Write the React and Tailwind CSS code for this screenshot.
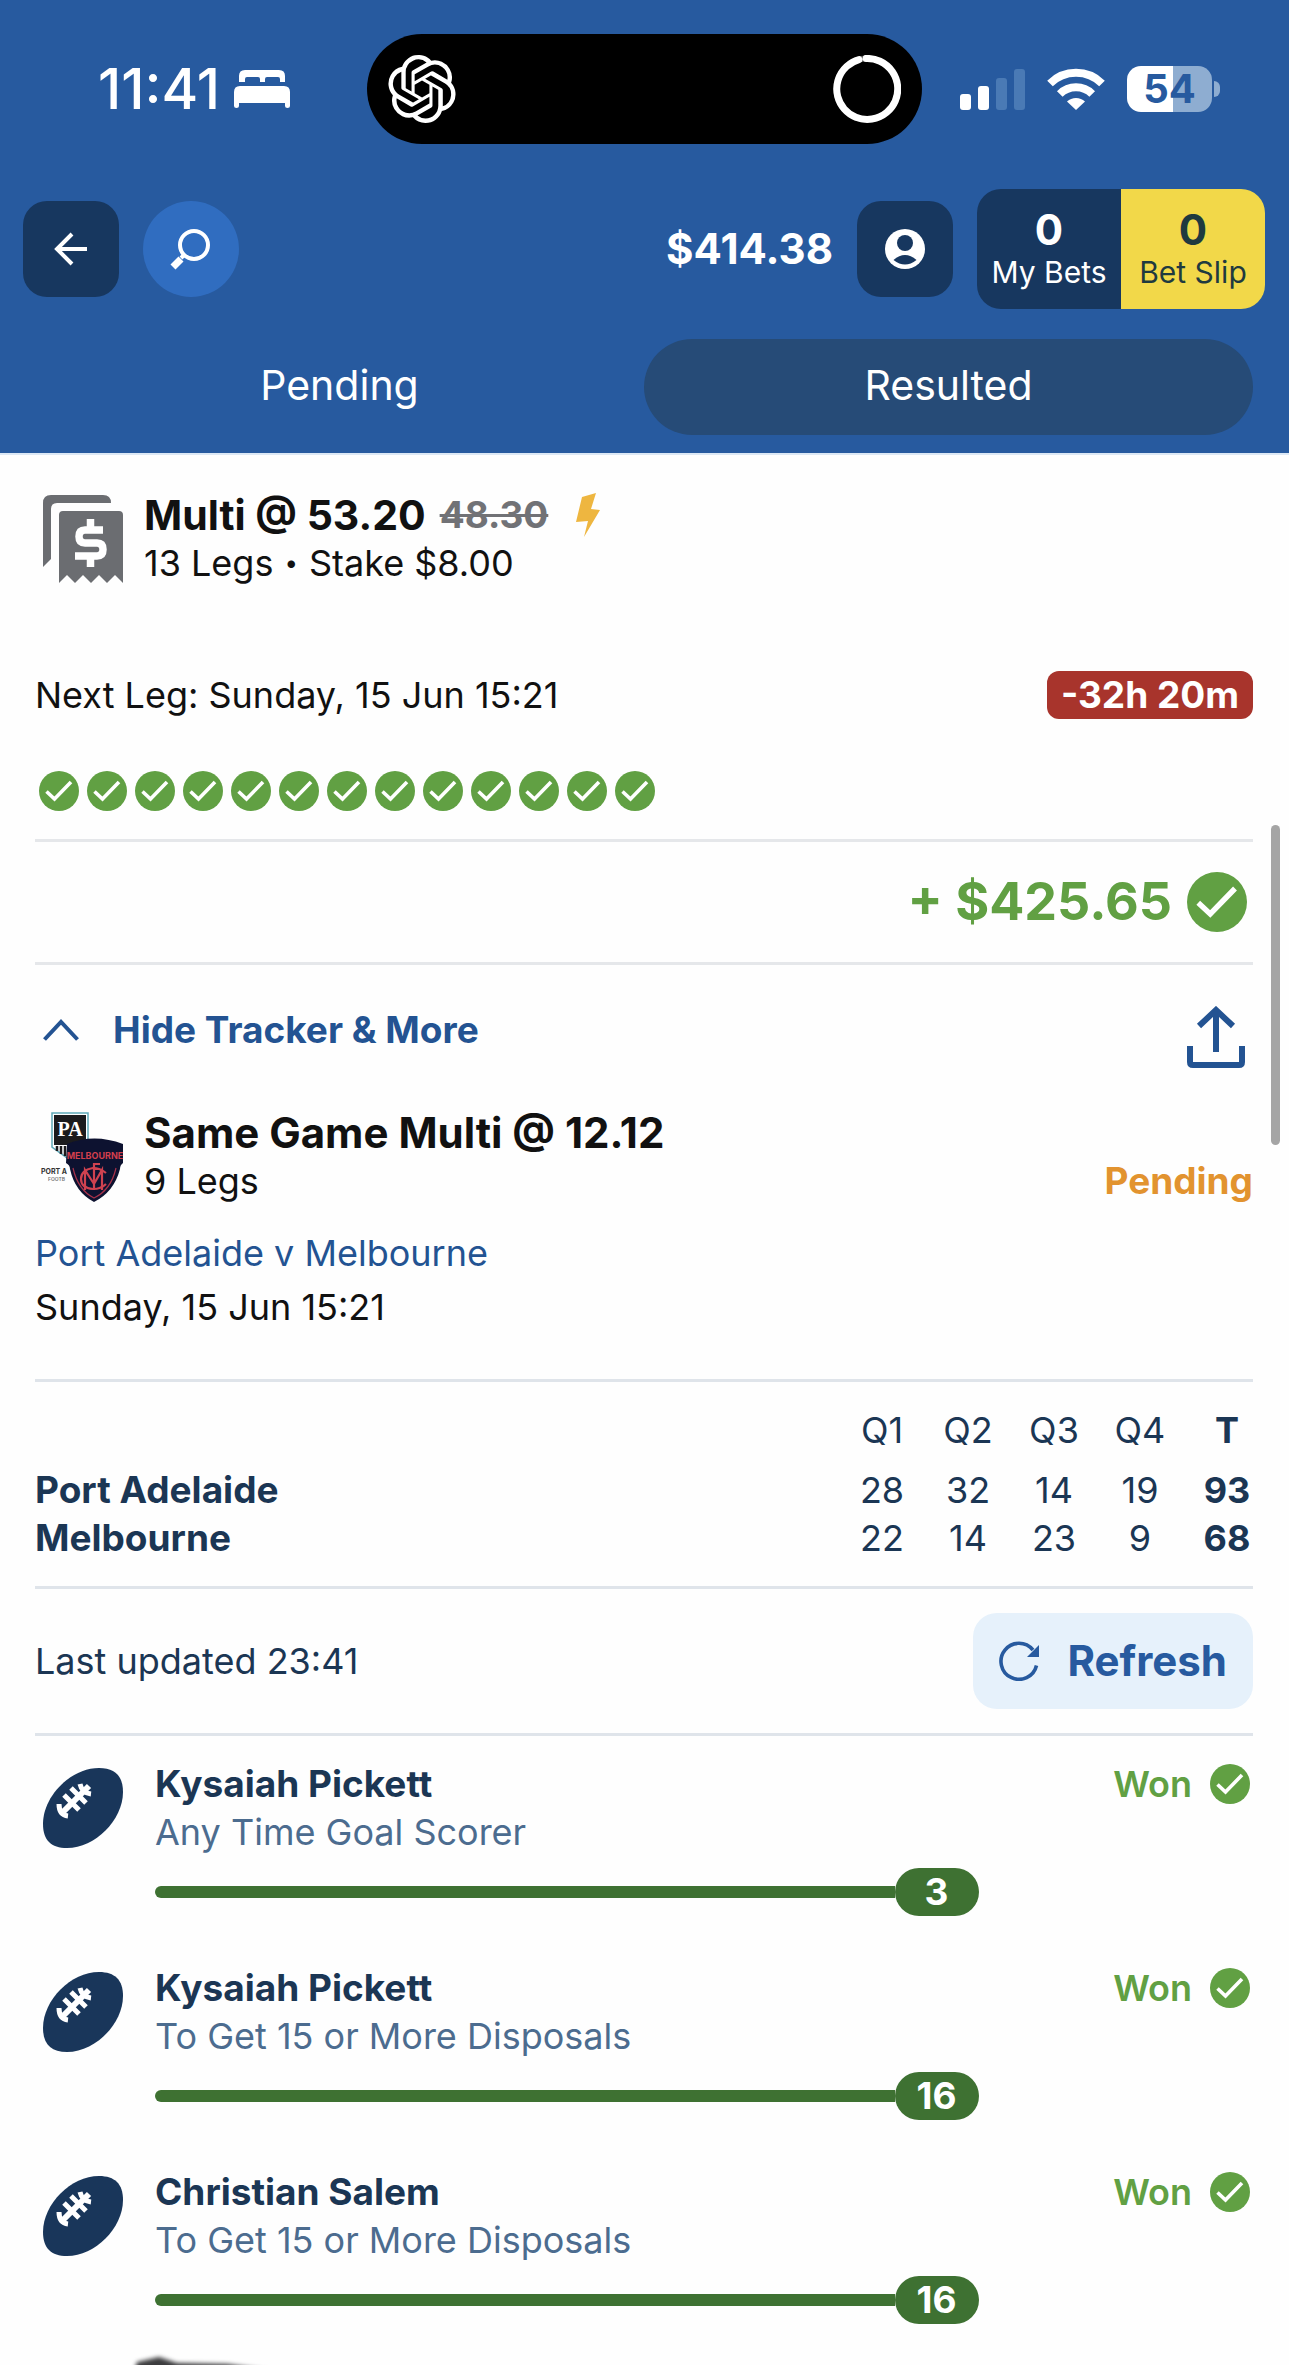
import React, { useState } from "react";
import { SiOpenai } from "react-icons/si";

const scores = [
  { team: "Port Adelaide", quarters: [28, 32, 14, 19], total: 93 },
  { team: "Melbourne", quarters: [22, 14, 23, 9], total: 68 },
];

const legs = [
  { player: "Kysaiah Pickett", market: "Any Time Goal Scorer", value: 3 },
  { player: "Kysaiah Pickett", market: "To Get 15 or More Disposals", value: 16 },
  { player: "Christian Salem", market: "To Get 15 or More Disposals", value: 16 },
];

function CheckCircle({ className }) {
  return (
    <svg viewBox="0 0 40 40" className={className} aria-hidden="true">
      <circle cx="20" cy="20" r="20" fill="#61a043" />
      <path d="M7.5 20.5 15.5 28 32 11" fill="none" stroke="#fff" strokeWidth="3.6" />
    </svg>
  );
}

function BedIcon() {
  return (
    <svg viewBox="0 0 56 38" className="h-[38px] w-14" fill="#fff" aria-hidden="true">
      <path d="M5 12V6q0-6 6-6h34q6 0 6 6v6h-5V9q0-2-2-2H33q-2 0-2 2v3h-5V9q0-2-2-2H13q-2 0-2 2v3z" />
      <path d="M0 22q0-6 6-6h44q6 0 6 6v14q0 2-2.500 2T51 36v-3H5v3q0 2-2.500 2T0 36z" />
    </svg>
  );
}

function WifiIcon() {
  return (
    <svg viewBox="0 0 58 42" className="h-[42px] w-[58px]" aria-hidden="true">
      <g fill="none" stroke="#fff" strokeWidth="8">
        <path d="M3 15.500a37 37 0 0 1 52 0" />
        <path d="M12.800 26a23 23 0 0 1 32.400 0" />
      </g>
      <path d="M29 42 20 33.500a13 13 0 0 1 18 0z" fill="#fff" />
    </svg>
  );
}

function StatusBar() {
  return (
    <div className="flex items-center pl-[98px] pr-[69px] pt-[34px] text-white">
      <div className="flex w-[269px] shrink-0 items-center gap-[14px]">
        <span className="text-[56px] leading-[60px] font-medium">11:41</span>
        <BedIcon />
      </div>
      <div className="flex h-[110px] flex-1 items-center justify-between rounded-full bg-black px-[21px]">
        <SiOpenai className="size-[68px]" />
        <svg viewBox="0 0 68 68" className="size-[68px]" fill="none" aria-hidden="true">
          <circle cx="34" cy="34" r="30.500" stroke="#555" strokeWidth="6" />
          <path d="M31 3.600A30.500 30.500 0 1 1 24 5.200" stroke="#fff" strokeWidth="7" strokeLinecap="round" transform="rotate(4 34 34)" />
        </svg>
      </div>
      <div className="ml-[38px] flex items-center">
        <div className="flex h-[42px] items-end gap-[7px]">
          <span className="h-4 w-[11px] rounded-[3px] bg-white" />
          <span className="h-6 w-[11px] rounded-[3px] bg-white" />
          <span className="h-8 w-[11px] rounded-[3px] bg-[#4a7ab5]" />
          <span className="h-[41px] w-[11px] rounded-[3px] bg-[#4a7ab5]" />
        </div>
        <div className="ml-[22px]">
          <WifiIcon />
        </div>
        <div className="ml-[22px] flex h-[46px] w-[85px] items-center justify-center rounded-[14px] bg-linear-to-r from-white from-54% to-[#8eadd1] to-54% text-[40px] leading-none font-bold text-[#275a9f]">
          54
        </div>
        <span className="ml-[2px] h-4 w-[6px] rounded-r-full bg-[#8eadd1]" />
      </div>
    </div>
  );
}

function NavBar() {
  return (
    <div className="flex items-center pl-[23px] pr-6 pt-[45px] text-white">
      <button aria-label="Back" className="flex size-24 items-center justify-center rounded-3xl bg-[#17375f]">
        <svg viewBox="0 0 34 34" className="size-[34px]" fill="none" stroke="#fff" strokeWidth="4" aria-hidden="true">
          <path d="M33 17H3M18 2 3 17l15 15" />
        </svg>
      </button>
      <button aria-label="Search" className="ml-6 flex size-24 items-center justify-center rounded-full bg-[#306dc0]">
        <svg viewBox="0 0 42 42" className="size-[42px]" fill="none" stroke="#fff" aria-hidden="true">
          <circle cx="24" cy="17" r="14" strokeWidth="4" />
          <path d="M14 27l-3 3" strokeWidth="4" />
          <path d="M11 31 3 39" strokeWidth="7" />
        </svg>
      </button>
      <span className="ml-auto text-[42px] leading-[48px] font-bold">$414.38</span>
      <button aria-label="Account" className="ml-6 flex size-24 items-center justify-center rounded-3xl bg-[#17375f]">
        <svg viewBox="0 0 40 40" className="size-10" aria-hidden="true">
          <circle cx="20" cy="20" r="20" fill="#fff" />
          <circle cx="20" cy="14" r="8" fill="#17375f" />
          <path d="M8.500 31q11.500-10 23 0-11.500 9-23 0z" fill="#17375f" />
        </svg>
      </button>
      <div className="ml-6 flex h-[120px] overflow-hidden rounded-3xl">
        <button className="flex w-36 flex-col items-center justify-center bg-[#17375f] pt-[2px]">
          <span className="text-[42px] leading-[44px] font-bold">0</span>
          <span className="text-[30px] leading-[40px]">My Bets</span>
        </button>
        <button className="flex w-36 flex-col items-center justify-center bg-[#f2d849] pt-[2px] text-[#1f3a3f]">
          <span className="text-[42px] leading-[44px] font-bold">0</span>
          <span className="text-[30px] leading-[40px]">Bet Slip</span>
        </button>
      </div>
    </div>
  );
}

function ReceiptIcon() {
  return (
    <svg viewBox="0 0 80 88" className="h-[88px] w-20" aria-hidden="true">
      <path d="M0 72V8q0-8 8-8h52q8 0 8 8H14q-6 0-6 6v50z" fill="#6b6d71" />
      <path d="M16 88V20q0-4 4-4h56q4 0 4 4v68l-8-8-8 8-8-8-8 8-8-8-8 8-8-8z" fill="#6b6d71" />
      <path d="M60 35H42q-6 0-6 6.500t6 6.500h12q6 0 6 6.500T54 61H32M47.500 24v13M47.500 59v13" fill="none" stroke="#fff" strokeWidth="7.500" />
    </svg>
  );
}

function BoltIcon() {
  return (
    <svg viewBox="0 0 24 44" className="h-11 w-6" aria-hidden="true">
      <path d="M6 4 20 0 15 16l9 1L8 44l4-16-12 1z" fill="#eeb640" />
    </svg>
  );
}

function ClubLogos() {
  return (
    <svg viewBox="0 0 84 90" className="h-[90px] w-[84px]" fontFamily="Inter, sans-serif" aria-hidden="true">
      <path d="M12 1h36v34L30 48 12 35z" fill="#fff" stroke="#5fa9b8" strokeWidth="1.500" />
      <path d="M14 3h32v30H14z" fill="#1b1b1d" />
      <path d="M17 34v5M21 34v8M25 34v10M29 34v12" stroke="#1b1b1d" strokeWidth="2.500" />
      <text x="30" y="24" fontSize="20" fontFamily="Liberation Serif, serif" fontWeight="700" textAnchor="middle" fill="#fff">PA</text>
      <text x="1" y="62" fontSize="7" fontWeight="700" fill="#333">PORT A</text>
      <text x="8" y="69" fontSize="5" fontWeight="600" fill="#777">FOOTB</text>
      <path d="M27 32q27-11 56 0v19q-3 2-3 6-6 23-26 33Q35 80 30 57q0-4-4-6z" fill="#0d1230" />
      <path d="M33 56q5 22 21 30 17-8 22-30" fill="none" stroke="#a8324a" strokeWidth="1.200" />
      <text x="55" y="47" fontSize="9" fontWeight="700" textAnchor="middle" fill="#d23f4d">MELBOURNE</text>
      <g fill="none" stroke="#cf4250" strokeWidth="2.200">
        <path d="M66 61q-6-5-13-5-12 2-12 11t12 10q8 0 13-5" />
        <path d="M45 78V58l9 14 8-14v20M54 78V52h6M54 57h5" />
      </g>
    </svg>
  );
}

function FootballIcon() {
  return (
    <svg viewBox="0 0 80 80" className="size-20" aria-hidden="true">
      <path d="M56 0C72 0 80 8 80 24 80 52 52 80 24 80 8 80 0 72 0 56 0 28 28 0 56 0z" fill="#19365a" />
      <g fill="none" stroke="#fff" strokeWidth="5">
        <path d="M18 46 46 18" strokeWidth="6" />
        <path d="M16 36q0 11 9 12M21 27l15 15M28 20l15 15M37 16q2 9 11 10" />
      </g>
    </svg>
  );
}

function BetSummary() {
  return (
    <section>
      <div className="flex h-24 items-center pl-2">
        <ReceiptIcon />
        <div className="ml-[21px]">
          <div className="flex items-center">
            <h1 className="text-[41px] leading-[48px] font-bold">Multi @ 53.20</h1>
            <s className="ml-[14px] text-[37px] leading-[48px] font-bold text-[#717276]">48.30</s>
            <span className="ml-7">
              <BoltIcon />
            </span>
          </div>
          <p className="flex items-center gap-[11px]">
            13 Legs <span className="text-[24px]">•</span> Stake $8.00
          </p>
        </div>
      </div>
      <div className="mt-[84px] flex items-center justify-between">
        <p>Next Leg: Sunday, 15 Jun 15:21</p>
        <span className="rounded-xl bg-[#a8342c] px-[14px] text-[37px] font-bold text-white">-32h 20m</span>
      </div>
      <div className="mt-[52px] flex gap-2 pl-1">
        {Array.from({ length: 13 }, (_, index) => (
          <CheckCircle key={index} className="size-10" />
        ))}
      </div>
    </section>
  );
}

function ScoreTable() {
  return (
    <table className="w-full table-fixed text-[#1b3654]">
      <colgroup>
        <col />
        <col className="w-[86px]" />
        <col className="w-[86px]" />
        <col className="w-[86px]" />
        <col className="w-[86px]" />
        <col className="w-[70px]" />
      </colgroup>
      <thead>
        <tr>
          <td className="pb-3" />
          {["Q1", "Q2", "Q3", "Q4"].map((quarter) => (
            <th key={quarter} scope="col" className="pb-3 font-normal">{quarter}</th>
          ))}
          <th scope="col" className="pb-3 pl-[18px] font-bold">T</th>
        </tr>
      </thead>
      <tbody>
        {scores.map((row) => (
          <tr key={row.team}>
            <th scope="row" className="text-left text-[37px] font-bold">{row.team}</th>
            {row.quarters.map((points, index) => (
              <td key={index} className="text-center">{points}</td>
            ))}
            <td className="pl-[18px] text-center font-bold">{row.total}</td>
          </tr>
        ))}
      </tbody>
    </table>
  );
}

function LegRow({ leg }) {
  return (
    <li className="flex pl-2">
      <div className="mt-2 shrink-0">
        <FootballIcon />
      </div>
      <div className="ml-8 min-w-0 flex-1">
        <div className="flex items-center justify-between">
          <h3 className="text-[37px] font-bold text-[#1b3654]">{leg.player}</h3>
          <span className="flex items-center gap-[18px] pr-[3px] font-semibold text-[#61a043]">
            Won
            <CheckCircle className="size-10" />
          </span>
        </div>
        <p className="text-[#4c6c8f]">{leg.market}</p>
        <div className="mt-3 flex w-3/4 items-center">
          <span className="h-3 flex-1 rounded-l-full bg-[#3e7132]" />
          <span className="w-[84px] rounded-full bg-[#3e7132] text-center text-[37px] font-bold text-white">{leg.value}</span>
        </div>
      </div>
    </li>
  );
}

export default function App() {
  const [tab, setTab] = useState("Resulted");

  return (
    <div className="relative overflow-hidden bg-[#fefefe] font-['Inter',sans-serif] text-[36px] leading-[48px] text-[#111]">
      <header className="border-b-2 border-[#dce8f5] bg-[#275a9f] pb-[18px]">
        <StatusBar />
        <NavBar />
        <div className="mt-[30px] flex pr-9 pl-[35px]">
          {["Pending", "Resulted"].map((name) => (
            <button
              key={name}
              onClick={() => setTab(name)}
              className={`h-24 flex-1 rounded-full pb-1 text-[41px] text-white ${tab === name ? "bg-[#264b77]" : ""}`}
            >
              {name}
            </button>
          ))}
        </div>
      </header>

      <main className="pr-9 pl-[35px] pt-9">
        <BetSummary />

        <div className="mt-7 flex items-center justify-end gap-[15px] border-y-3 border-[#e5e7ea] py-[30px] pr-[6px]">
          <span className="text-[52px] leading-[60px] font-bold text-[#61a043]">+ $425.65</span>
          <CheckCircle className="size-[60px]" />
        </div>

        <div className="mt-[41px] flex items-start justify-between px-2 text-[#235392]">
          <button className="flex items-center gap-[34px] text-[37px] font-bold">
            <svg viewBox="0 0 36 22" className="h-[22px] w-9" fill="none" stroke="#235392" strokeWidth="4" aria-hidden="true">
              <path d="M1.500 20.500 18 3l16.500 17.500" />
            </svg>
            Hide Tracker &amp; More
          </button>
          <button aria-label="Share">
            <svg viewBox="0 0 58 62" className="h-[62px] w-[58px]" fill="none" stroke="#235392" strokeWidth="6" aria-hidden="true">
              <path d="M3 40v16q0 3 3 3h46q3 0 3-3V40M29 46V5M12 20 29 4l17 16" />
            </svg>
          </button>
        </div>

        <section className="mt-[41px]">
          <div className="flex h-24 items-end">
            <div className="ml-[5px] self-center">
              <ClubLogos />
            </div>
            <div className="ml-5">
              <h2 className="text-[42px] leading-[48px] font-bold">Same Game Multi @ 12.12</h2>
              <p>9 Legs</p>
            </div>
            <span className="ml-auto text-[37px] font-bold text-[#e2932f]">Pending</span>
          </div>
          <a href="#match" className="mt-6 block text-[#235392]">Port Adelaide v Melbourne</a>
          <p className="mt-[6px]">Sunday, 15 Jun 15:21</p>
        </section>

        <div className="mt-12 border-y-3 border-[#dfe4ea] py-6">
          <ScoreTable />
        </div>

        <div className="flex items-center justify-between border-b-3 border-[#dfe4ea] py-6">
          <p className="text-[#1b3654]">Last updated 23:41</p>
          <button className="flex h-24 items-center gap-7 rounded-3xl bg-[#e6f1fb] px-[26px] text-[42px] font-bold text-[#275a9f]">
            <svg viewBox="0 0 40 40" className="size-10" aria-hidden="true">
              <path d="M37.500 24.500A18 18 0 1 1 34 9" fill="none" stroke="#275a9f" strokeWidth="3.600" />
              <path d="M40 4v12H28z" fill="#275a9f" />
            </svg>
            Refresh
          </button>
        </div>

        <ul className="flex flex-col gap-12 pt-6">
          {legs.map((leg, index) => (
            <LegRow key={index} leg={leg} />
          ))}
        </ul>

        {/* top edge of the next leg's photo */}
        <div className="mt-[27px] ml-[90px] h-[14px] overflow-hidden">
          <svg viewBox="0 0 160 24" className="h-6 w-40 blur-[2px]" aria-hidden="true">
            <path d="M8 24 12 11 34 6l18 6 50 1 48 7v4z" fill="#3c3c3e" />
          </svg>
        </div>
      </main>

      {/* scroll thumb */}
      <div className="absolute top-[825px] right-[9px] h-80 w-[9px] rounded-full bg-[#a5a5a5]" />
    </div>
  );
}
